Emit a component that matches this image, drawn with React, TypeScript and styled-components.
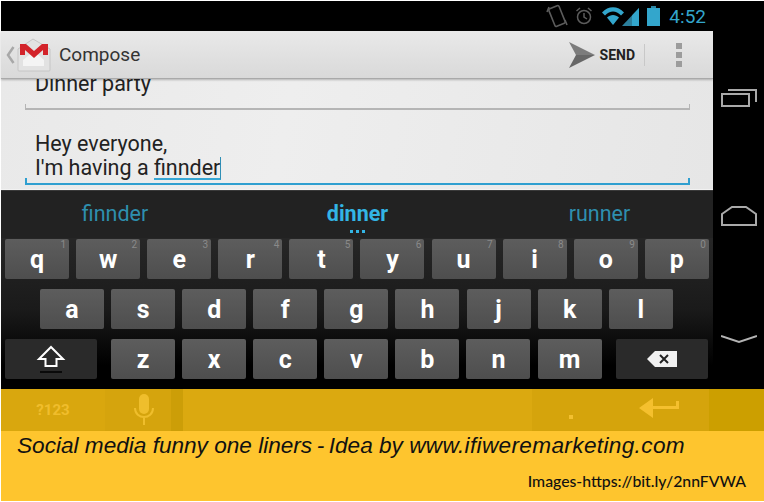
import React from "react";
import styled, { createGlobalStyle } from "styled-components";

const GlobalStyle = createGlobalStyle`
  html, body {
    margin: 0;
    padding: 0;
    background: #fff;
  }
`;

const ROW_ONE = [
  ["q", "1"],
  ["w", "2"],
  ["e", "3"],
  ["r", "4"],
  ["t", "5"],
  ["y", "6"],
  ["u", "7"],
  ["i", "8"],
  ["o", "9"],
  ["p", "0"],
];
const ROW_TWO = ["a", "s", "d", "f", "g", "h", "j", "k", "l"];
const ROW_THREE = ["z", "x", "c", "v", "b", "n", "m"];

function App() {
  return (
    <Page>
      <GlobalStyle />
      <Phone>
        <Screen>
          <StatusBar>
            <svg width="22" height="26" viewBox="0 0 22 26" fill="none" stroke="#5c5c5c" strokeWidth="1.6">
              <rect x="5.500" y="3.500" width="11" height="19" rx="1.500" transform="rotate(-22 11 13)" />
              <path d="M3 4L1 9M19 17l2 5" />
            </svg>
            <Alarm width="18" height="20" viewBox="0 0 18 20" fill="none" stroke="#5c5c5c" strokeWidth="1.5">
              <circle cx="9" cy="11" r="6.500" />
              <path d="M9 7v4l3 2M1.500 5L5 2M16.500 5L13 2" />
            </Alarm>
            <Signal width="38" height="21" viewBox="0 0 38 21">
              <path d="M0 6.500C6-.5 16-.5 22 6.500l-3 3C14 4 8 4 3 9.500z" fill="#33a6cc" />
              <path d="M5 11.500c3.500-3.500 8.500-3.500 12 0L11 19z" fill="#33a6cc" />
              <path d="M20 20L37 2v18z" fill="#2b7f9c" />
              <path d="M30 9.500V20h7V2z" fill="#33a6cc" />
            </Signal>
            <svg width="13" height="20" viewBox="0 0 13 20">
              <rect x="4" y="0" width="5" height="2" fill="#2c86a4" />
              <rect x="0" y="2" width="13" height="18" fill="#33a6cc" />
            </svg>
            <Clock>4:52</Clock>
          </StatusBar>
          <ActionBar>
            <UpChevron width="9" height="18" viewBox="0 0 9 18" fill="none" stroke="#a8a8a8" strokeWidth="2.500">
              <path d="M7.500 1L2 9l5.500 8" />
            </UpChevron>
            <GmailLogo width="36" height="34" viewBox="0 0 36 34">
              <path d="M2 11L17 1l17 10v21a1 1 0 0 1-1 1H3a1 1 0 0 1-1-1z" fill="#e2e2e2" stroke="#c6c6c6" />
              <path d="M7 22l11-9 10 9v6H7z" fill="#f4f4f4" />
              <path d="M4 6h6l8 7 8-7h6v11h-5v-5l-9 8-9-8v5H4z" fill="#d3232a" />
            </GmailLogo>
            <AppTitle>Compose</AppTitle>
            <SendAction>
              <svg width="26" height="26" viewBox="0 0 26 26">
                <path d="M0 0l26 13H7z" fill="#7c7c7c" />
                <path d="M0 26l26-13H7z" fill="#676767" />
              </svg>
              <SendLabel>SEND</SendLabel>
            </SendAction>
            <ActionDivider />
            <Overflow>
              <OverflowDot />
              <OverflowDot />
              <OverflowDot />
            </Overflow>
          </ActionBar>
          <Content>
            <SubjectField>
              <FieldText>Dinner party</FieldText>
            </SubjectField>
            <BodyField>
              <FieldText>Hey everyone,</FieldText>
              <FieldText>
                I'm having a <Composing>finnder</Composing>
              </FieldText>
            </BodyField>
          </Content>
          <Keyboard>
            <Suggestions>
              <Suggestion $width={228}>finnder</Suggestion>
              <Suggestion $width={257} $primary>
                dinner
                <MoreDots>
                  <i />
                  <i />
                  <i />
                </MoreDots>
              </Suggestion>
              <Suggestion $width={227}>runner</Suggestion>
            </Suggestions>
            <KeyRows>
              <KeyRow>
                {ROW_ONE.map(([letter, hint]) => (
                  <Key key={letter}>
                    {letter}
                    <KeyHint>{hint}</KeyHint>
                  </Key>
                ))}
              </KeyRow>
              <KeyRow $indent={35}>
                {ROW_TWO.map((letter) => (
                  <Key key={letter}>{letter}</Key>
                ))}
              </KeyRow>
              <ThirdRow>
                <ModifierKey>
                  <svg width="30" height="30" viewBox="0 0 30 30" fill="none">
                    <path
                      d="M15 3L27 15h-6.500v7h-11v-7H3z"
                      stroke="#fff"
                      strokeWidth="2"
                      strokeLinejoin="miter"
                    />
                    <path d="M4 28h22" stroke="#0a0a0a" strokeWidth="2" />
                  </svg>
                </ModifierKey>
                <KeyRow>
                  {ROW_THREE.map((letter) => (
                    <Key key={letter}>{letter}</Key>
                  ))}
                </KeyRow>
                <ModifierKey>
                  <svg width="32" height="18" viewBox="0 0 32 18">
                    <path d="M9 1h22v16H9L1 9z" fill="#f1f1f1" />
                    <path d="M14 5l8 8M22 5l-8 8" stroke="#222" strokeWidth="2" />
                  </svg>
                </ModifierKey>
              </ThirdRow>
            </KeyRows>
          </Keyboard>
        </Screen>
        <NavRail>
          <svg width="36" height="20" viewBox="0 0 36 20" fill="none" stroke="#a9a9a9" strokeWidth="2">
            <rect x="1" y="7" width="27" height="12" />
            <path d="M7 3h28v12" />
          </svg>
          <svg width="36" height="20" viewBox="0 0 36 20" fill="none" stroke="#a9a9a9" strokeWidth="2">
            <path d="M1 8L11 1h14l10 7v11H1z" />
          </svg>
          <svg width="36" height="20" viewBox="0 0 36 20" fill="none" stroke="#b4b4b4" strokeWidth="2">
            <path d="M0 8l18 6 18-6" />
          </svg>
        </NavRail>
      </Phone>
      <Caption>
        <BottomKeys>
          <BottomCell $width={104} $tone="#d9a70e">
            <SymbolsLabel>?123</SymbolsLabel>
          </BottomCell>
          <BottomCell $width={78} $tone="#d5a40d" $strip>
            <svg width="20" height="32" viewBox="0 0 20 32" fill="none">
              <rect x="5" y="0" width="10" height="20" rx="5" fill="#efbe2c" />
              <path d="M1 14c0 12 18 12 18 0M10 24v7" stroke="#efbe2c" strokeWidth="2" />
            </svg>
          </BottomCell>
          <BottomCell $width={349} $tone="#dba910" />
          <BottomCell $width={78} $tone="#d5a40c">
            <PeriodDot />
          </BottomCell>
          <BottomCell $width={99} $tone="#d5a40c">
            <ReturnArrow width="41" height="20" viewBox="0 0 41 20">
              <path d="M0 10L14 0v8h23V3h3v8H14v9z" fill="#f5c02e" />
            </ReturnArrow>
          </BottomCell>
          <BottomCell $width={55} $tone="#cc9f00" />
        </BottomKeys>
        <Headline>
          Social media funny one liners{"\u2009"}-{"\u2009"}Idea by <SiteName>www.ifiweremarketing.com</SiteName>
        </Headline>
        <Credit>Images-https://bit.ly/2nnFVWA</Credit>
      </Caption>
    </Page>
  );
}

export default App;

const Page = styled.div`
  width: 763px;
  height: 500px;
  padding: 1px 0 1px 1px;
  display: flex;
  flex-direction: column;
  background: #fff;
  overflow: hidden;
`;

const Phone = styled.div`
  display: flex;
  height: 388px;
  background: #000;
`;

const Screen = styled.div`
  width: 712px;
  display: flex;
  flex-direction: column;
`;

const StatusBar = styled.div`
  height: 30px;
  display: flex;
  align-items: center;
  justify-content: flex-end;
  padding-right: 7px;
  background: #000;
`;

const Alarm = styled.svg`
  margin-left: 7px;
`;

const Signal = styled.svg`
  margin: 0 7px 0 9px;
`;

const Clock = styled.span`
  margin-left: 9px;
  font: 400 19px "Roboto", sans-serif;
  color: #33a6cc;
`;

const ActionBar = styled.div`
  height: 47px;
  display: flex;
  align-items: center;
  background: linear-gradient(#e9e9e9, #d9d9d9);
  border-bottom: 1px solid #a9a9a9;
  box-shadow: 0 1px 2px rgba(0, 0, 0, 0.25);
  position: relative;
  z-index: 1;
`;

const UpChevron = styled.svg`
  margin-left: 5px;
`;

const GmailLogo = styled.svg`
  margin: 1px 0 0 1px;
`;

const AppTitle = styled.span`
  margin-left: 7px;
  flex: 1;
  font: 400 19px "Roboto", sans-serif;
  color: #333;
`;

const SendAction = styled.div`
  display: flex;
  align-items: center;
  gap: 5px;
`;

const SendLabel = styled.span`
  font: 700 14px "Roboto", sans-serif;
  color: #222;
`;

const ActionDivider = styled.div`
  width: 1px;
  height: 22px;
  margin: 0 31px 0 9px;
  background: #c8c8c8;
`;

const Overflow = styled.div`
  display: flex;
  flex-direction: column;
  gap: 3px;
  margin-right: 31px;
`;

const OverflowDot = styled.span`
  width: 6px;
  height: 6px;
  background: #9c9c9c;
`;

const Content = styled.div`
  height: 111px;
  overflow: hidden;
  background: linear-gradient(100deg, #e9e9e9, #eeeeee 40%, #e6e6e6);
  border-bottom: 1px solid #f2f2f2;
  box-sizing: border-box;
`;

const SubjectField = styled.div`
  display: flow-root;
  height: 31px;
  margin: 0 23px 0 24px;
  padding: 0 10px;
  border-bottom: 2px solid #b5b5b5;
  box-sizing: border-box;
  position: relative;

  &::before,
  &::after {
    content: "";
    position: absolute;
    bottom: 0;
    width: 1px;
    height: 4px;
    background: #b5b5b5;
  }
  &::before {
    left: 0;
  }
  &::after {
    right: 0;
  }

  span {
    margin-top: -7px;
  }
`;

const BodyField = styled.div`
  height: 75px;
  margin: 0 23px 0 24px;
  padding: 22px 10px 0;
  border-bottom: 2px solid #2f9fd0;
  box-sizing: border-box;
  position: relative;

  &::before,
  &::after {
    content: "";
    position: absolute;
    bottom: 0;
    width: 2px;
    height: 5px;
    background: #2f9fd0;
  }
  &::before {
    left: 0;
  }
  &::after {
    right: 0;
  }
`;

const FieldText = styled.span`
  display: block;
  font: 400 21.5px/24px "Roboto", sans-serif;
  color: #222;
`;

const Composing = styled.span`
  display: inline-block;
  line-height: 21px;
  border-bottom: 2px solid #37a7d4;
  border-right: 1px solid #2f8fb5;
`;

const Keyboard = styled.div`
  flex: 1;
  background: linear-gradient(#262626 25%, #1a1a1a 60%, #000 88%);
  border-top: 1px solid #3a3a3a;
`;

const Suggestions = styled.div`
  height: 47px;
  display: flex;
  background: #222;
`;

const Suggestion = styled.div<{ $width: number; $primary?: boolean }>`
  width: ${({ $width }) => $width}px;
  box-sizing: border-box;
  position: relative;
  padding-top: 10px;
  text-align: center;
  font: ${({ $primary }) => ($primary ? 700 : 400)} 21.5px "Roboto", sans-serif;
  color: ${({ $primary }) => ($primary ? "#33b5e5" : "#2e8fae")};

  & + &::before {
    content: "";
    position: absolute;
    left: 0;
    top: 4px;
    bottom: 4px;
    width: 1px;
    background: #2c2c2c;
  }
`;

const MoreDots = styled.div`
  position: absolute;
  left: 0;
  right: 0;
  bottom: 5px;
  display: flex;
  justify-content: center;
  gap: 3px;

  i {
    width: 3px;
    height: 3px;
    background: #33b5e5;
  }
`;

const KeyRows = styled.div`
  display: flex;
  flex-direction: column;
  gap: 10px;
  padding: 1px 0 0 4px;
`;

const KeyRow = styled.div<{ $indent?: number }>`
  display: flex;
  gap: 7.1px;
  margin-left: ${({ $indent }) => $indent ?? 0}px;
`;

const ThirdRow = styled.div`
  display: flex;
  gap: 14px;
`;

const Key = styled.div`
  width: 64px;
  height: 40px;
  position: relative;
  display: flex;
  align-items: center;
  justify-content: center;
  border-radius: 2px;
  background: linear-gradient(#5d5d5d, #4e4e4e);
  font: 700 25px "Roboto", sans-serif;
  color: #fff;
`;

const KeyHint = styled.span`
  position: absolute;
  top: 0;
  right: 3px;
  font: 400 10px "Roboto", sans-serif;
  color: #8a8a8a;
`;

const ModifierKey = styled.div`
  width: 92px;
  height: 40px;
  display: flex;
  align-items: center;
  justify-content: center;
  border-radius: 2px;
  background: #2a2a2a;
`;

const NavRail = styled.div`
  flex: 1;
  display: flex;
  flex-direction: column;
  align-items: center;
  gap: 99px;
  padding-top: 86px;
  background: #000;

  svg:last-child {
    transform: translateY(3px);
  }
`;

const Caption = styled.div`
  flex: 1;
  display: flex;
  flex-direction: column;
  background: #fec52e;
`;

const BottomKeys = styled.div`
  height: 42px;
  display: flex;
`;

const BottomCell = styled.div<{ $width: number; $tone: string; $strip?: boolean }>`
  width: ${({ $width }) => $width}px;
  display: flex;
  align-items: center;
  justify-content: center;
  background: ${({ $tone }) => $tone};
  box-shadow: ${({ $strip }) => ($strip ? "inset -12px 0 0 #cc9e08" : "none")};
`;

const SymbolsLabel = styled.span`
  font: 700 15px "Roboto", sans-serif;
  color: #f0bd2c;
`;

const PeriodDot = styled.span`
  width: 4px;
  height: 4px;
  margin-top: 14px;
  background: #f3c030;
`;

const ReturnArrow = styled.svg`
  margin-bottom: 4px;
`;

const Headline = styled.div`
  padding: 2px 0 0 16px;
  font: italic 400 22.6px "Liberation Sans", Arial, sans-serif;
  color: #111;
  white-space: nowrap;
`;

const SiteName = styled.span`
  letter-spacing: 0.35px;
`;

const Credit = styled.div`
  margin-top: 12px;
  padding-right: 18px;
  text-align: right;
  font: 500 15.800px "Lato", sans-serif;
  color: #111;
`;
